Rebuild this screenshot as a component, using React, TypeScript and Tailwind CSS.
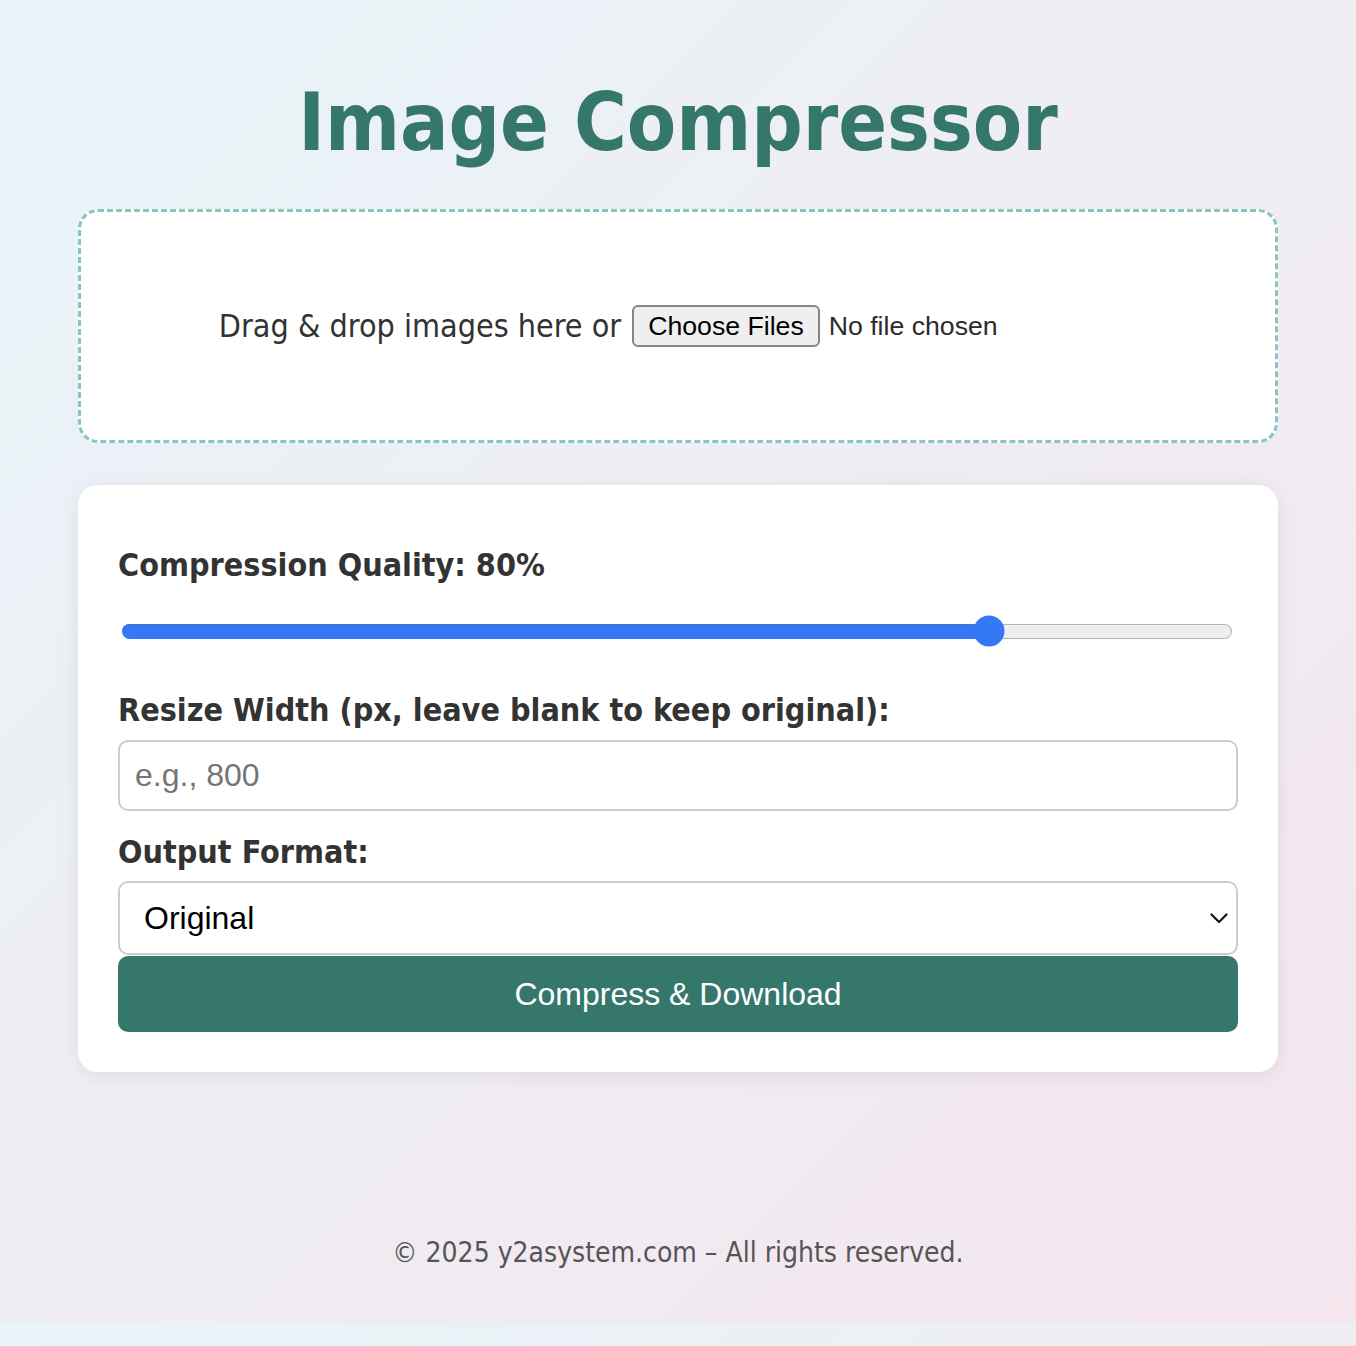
export default function App() {
  return (
    <div className="min-h-[1346px] bg-[linear-gradient(135deg,#e8f4f8_0%,#f5e6ee_100%)] bg-[length:100%_1323px] bg-repeat-y pt-[75px] font-['DejaVu_Sans_Condensed','DejaVu_Sans',sans-serif] font-stretch-condensed text-[#333]">
      {/* Title */}
      <h1 className="text-center text-[80px] leading-[96px] font-bold text-[#36776b]">Image Compressor</h1>

      <div className="mx-auto mt-[38px] w-[1200px]">
        {/* Drop zone */}
        <div className="flex h-[234px] items-center justify-center rounded-[20px] border-[3px] border-dashed border-[#88c6bf] bg-white">
          <span className="text-[32px] leading-[40px]">Drag &amp; drop images here or</span>
          <div className="ml-[11px] flex w-[505px] items-center font-['Liberation_Sans',Arial,sans-serif] text-[26.67px]">
            <span className="flex h-[42px] items-center rounded-[6px] border-2 border-[#858585] bg-[#efefef] px-[14px] text-black">
              Choose Files
            </span>
            <span className="ml-[9px] text-[#2b2b2b]">No file chosen</span>
          </div>
        </div>

        {/* Settings card */}
        <div className="mt-[42px] rounded-[20px] bg-white px-[40px] pt-[60px] pb-[40px] shadow-[0_4px_20px_rgba(0,0,0,0.07)]">
          <label className="block text-[32px] leading-[40px] font-bold">Compression Quality: 80%</label>

          <div className="mt-[30px] flex h-[32px] items-center pr-[6px] pl-[4px]">
            <div className="relative flex h-[15px] w-full">
              <div className="h-full w-[78.1%] rounded-l-full bg-[#3478f6] shadow-[inset_0_1px_0_#4a6fb8]"></div>
              <div className="h-full flex-1 rounded-r-full border-[1.5px] border-l-0 border-[#b4b4b4] bg-[#efefef]"></div>
              <div className="absolute top-1/2 left-[78.1%] h-[31px] w-[31px] -translate-x-1/2 -translate-y-1/2 rounded-full bg-[#3478f6]"></div>
            </div>
          </div>

          <label className="mt-[43px] block text-[32px] leading-[40px] font-bold">
            Resize Width (px, leave blank to keep original):
          </label>
          <input
            type="number"
            placeholder="e.g., 800"
            className="mt-[10px] block h-[71px] w-full rounded-[10px] border-2 border-[#cccccc] bg-white px-[15px] font-['Liberation_Sans',Arial,sans-serif] text-[32px] text-black outline-none placeholder:text-[#757575]"
          />

          <label className="mt-[21px] block text-[32px] leading-[40px] font-bold">Output Format:</label>
          <div className="mt-[9px] flex h-[74px] w-full items-center justify-between rounded-[10px] border-2 border-[#cccccc] bg-white pr-[8px] pl-[24px] font-['Liberation_Sans',Arial,sans-serif] text-[32px] text-black">
            <span>Original</span>
            <svg width="18" height="11" viewBox="0 0 18 11" fill="none">
              <path d="M1.5 1.5 L9 9 L16.5 1.5" stroke="#111" strokeWidth="2.2" strokeLinecap="round" strokeLinejoin="round" />
            </svg>
          </div>

          <button className="mt-[1px] flex h-[76px] w-full items-center justify-center rounded-[10px] bg-[#36776b] font-['Liberation_Sans',Arial,sans-serif] text-[32px] text-white">
            Compress &amp; Download
          </button>
        </div>
      </div>

      {/* Footer */}
      <footer className="mt-[163px] text-center text-[28px] leading-[36px] text-[#555]">
        © 2025 y2asystem.com – All rights reserved.
      </footer>
    </div>
  )
}
